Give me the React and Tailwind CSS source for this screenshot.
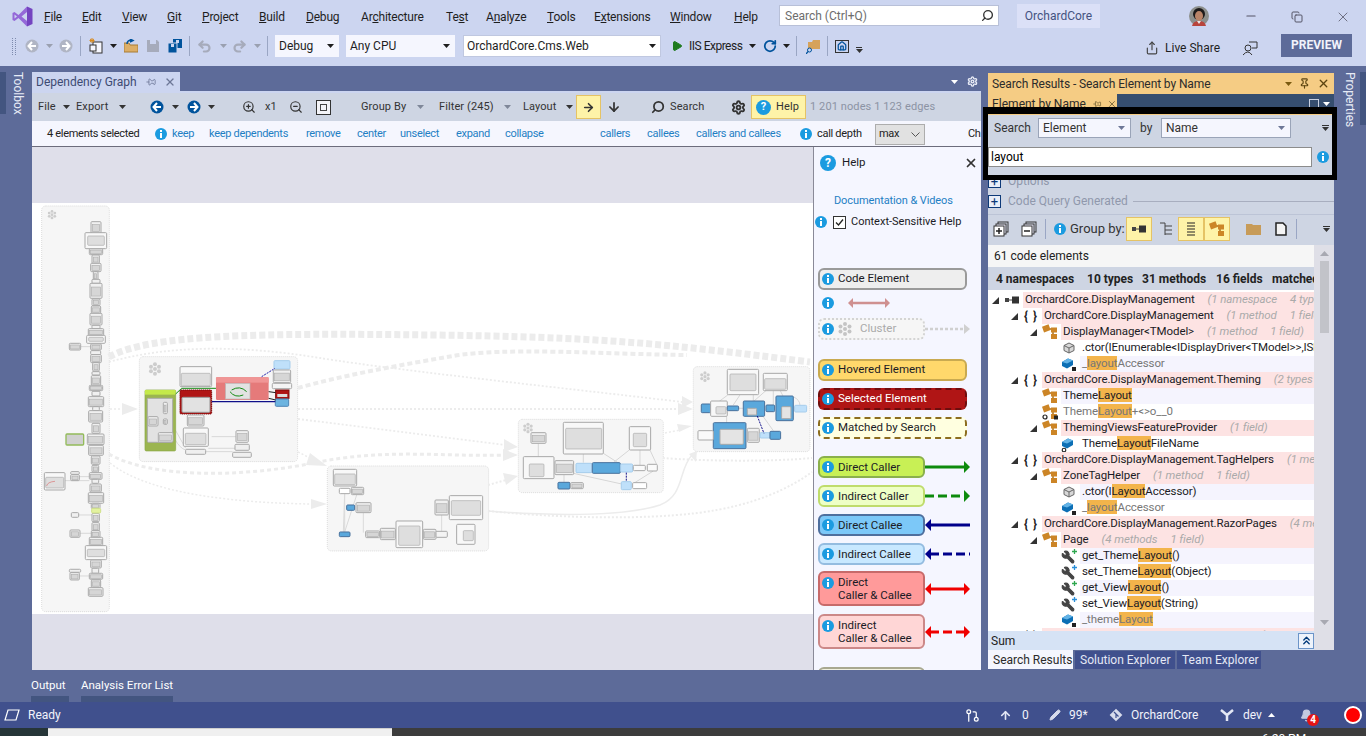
import { ArrowDown, ArrowRight, ArrowUp, Bell, ChevronsUp, Copy, GitPullRequest, Home, Minus, Pencil, Pin, Play, Redo2, RotateCw, Search, Settings, Share, Undo2, Wrench, X, ZoomIn, ZoomOut } from 'lucide-react';

const Caret = ({ className = 'text-[#333]' }) => (
  <svg width="7" height="4" viewBox="0 0 7 4" className={`shrink-0 ${className}`}>
    <polygon points="0,0 7,0 3.5,4" fill="currentColor" />
  </svg>
);

const Info = ({ className = '' }) => (
  <svg width="12" height="12" viewBox="0 0 12 12" className={`shrink-0 ${className}`}>
    <circle cx="6" cy="6" r="6" fill="#1b9be0" />
    <rect x="5" y="2" width="2" height="2" fill="#fff" />
    <rect x="5" y="5" width="2" height="5" fill="#fff" />
  </svg>
);

const Sep = ({ className = '' }) => <div className={`w-px h-[20px] bg-[#9aa6c4] shrink-0 ${className}`} />;

const NavCircle = ({ color, dir, className = '' }) => (
  <svg width="14" height="14" viewBox="0 0 14 14" className={`shrink-0 ${className}`}>
    <circle cx="7" cy="7" r="6.5" fill={color} />
    <path d={dir === 'left' ? 'M7 3 L3.5 7 L7 11 M4 7 H11' : 'M7 3 L10.5 7 L7 11 M3 7 H10'} stroke="#fff" strokeWidth="2" fill="none" />
  </svg>
);

const VsLogo = () => (
  <svg width="21" height="21" viewBox="0 0 21 21" className="shrink-0">
    <path d="M15 0.5 L6.5 9 L2.5 6 L0.5 7 V14 L2.5 15 L6.5 12 L15 20.5 V15 L9.5 10.5 L15 6 Z M2.5 8.5 L5 10.5 L2.5 12.5 Z" fill="#9468d8" fillRule="evenodd" />
    <path d="M15 0.5 L20.5 3 V18 L15 20.5 Z" fill="#7444c0" />
  </svg>
);

const Avatar = () => (
  <svg width="20" height="20" viewBox="0 0 20 20" className="shrink-0">
    <circle cx="10" cy="10" r="10" fill="#8c8f8c" />
    <circle cx="10" cy="8" r="6" fill="#1c1a1a" />
    <ellipse cx="10" cy="10" rx="4" ry="5" fill="#b98468" />
    <path d="M3 20 Q4 15 10 15 Q16 15 17 20 Z" fill="#b8443c" />
    <path d="M8 15 L10 18 L12 15 Z" fill="#e8e8e8" />
  </svg>
);

const ClassIcon = ({ ban = false }) => (
  <svg width="16" height="16" viewBox="0 0 16 16" className="shrink-0">
    <path d="M5 5 H11 V12" stroke="#a9701c" strokeWidth="1.5" fill="none" />
    <rect x="1" y="1.5" width="7" height="6" fill="#cc8526" transform="rotate(-20 4 5)" />
    <rect x="9" y="3.5" width="6" height="5" fill="#cc8526" />
    <rect x="9" y="10" width="6" height="5" fill="#cc8526" />
    {ban && <circle cx="3" cy="13" r="2" fill="#fff" stroke="#222" strokeWidth="1.2" />}
    {ban && <rect x="12" y="11.5" width="4" height="4" fill="#222" />}
  </svg>
);

const FieldIcon = ({ lock = false, ban = false }) => (
  <svg width="16" height="16" viewBox="0 0 16 16" className="shrink-0">
    <path d="M1 6 L7 2.5 L12 4.5 V9 L6 12.5 L1 10 Z" fill="#0c6fb5" />
    <path d="M1 6 L7 2.5 L12 4.5 L6 7.5 Z" fill="#63b3e6" />
    {lock && <rect x="11" y="11" width="4" height="4" fill="#222" />}
    {ban && <circle cx="3" cy="14" r="1.8" fill="#fff" stroke="#222" strokeWidth="1.1" />}
  </svg>
);

const CubeIcon = () => (
  <svg width="12" height="12" viewBox="0 0 12 12" className="shrink-0">
    <path d="M6 1 L11 3.5 V8.5 L6 11 L1 8.5 V3.5 Z" fill="#d8d8d8" stroke="#666" />
    <path d="M1 3.5 L6 6 L11 3.5 M6 6 V11" stroke="#666" fill="none" />
  </svg>
);

const WrenchIcon = ({ color }) => (
  <div className="relative w-[16px] h-[14px] shrink-0">
    <Wrench size={14} className="text-[#444] fill-[#444] -scale-x-100 absolute left-0 top-[1px]" />
    <svg width="5" height="5" viewBox="0 0 5 5" className="absolute right-0 top-0">
      <path d="M0 2.5 H5 M2.5 0 V5" stroke={color} strokeWidth="1.3" />
    </svg>
  </div>
);

const NsIcon = () => (
  <svg width="14" height="8" viewBox="0 0 14 8" className="shrink-0">
    <rect x="0" y="2" width="4" height="4" fill="#444" />
    <rect x="4" y="3.5" width="3" height="1" fill="#444" />
    <rect x="7" y="0.5" width="7" height="7" fill="#333" />
  </svg>
);

const Braces = () => <span className="text-[12px] font-bold text-[#222] tracking-[1px] shrink-0">{'{ }'}</span>;

const Expander = () => (
  <svg width="7" height="7" viewBox="0 0 7 7" className="shrink-0">
    <polygon points="7,0 7,7 0,7" fill="#333" />
  </svg>
);

// splits the label so the matched part gets the orange search highlight
const Hl = ({ text }) => {
  const parts = text.split(/(layout)/i);
  return parts.map((p, i) =>
    /^layout$/i.test(p) ? <span key={i} className="bg-[#f3b44b]">{p}</span> : <span key={i}>{p}</span>
  );
};

const treeRows = [
  { lvl: 0, exp: 1, icon: <NsIcon />, text: 'OrchardCore.DisplayManagement', meta: ['(1 namespace', '4 types)'], bg: 'bg-[#fde3e3]' },
  { lvl: 1, exp: 1, icon: <Braces />, text: 'OrchardCore.DisplayManagement', meta: ['(1 method', '1 field)'], bg: 'bg-[#fde3e3]' },
  { lvl: 2, exp: 1, icon: <ClassIcon />, text: 'DisplayManager<TModel>', meta: ['(1 method', '1 field)'], bg: 'bg-[#fde3e3]' },
  { lvl: 3, icon: <CubeIcon />, text: '.ctor(IEnumerable<IDisplayDriver<TModel>>,IShapeFactory)', bg: 'bg-white' },
  { lvl: 3, icon: <FieldIcon lock />, text: '_layoutAccessor', gray: 1, bg: 'bg-[#f5f4fe]' },
  { lvl: 1, exp: 1, icon: <Braces />, text: 'OrchardCore.DisplayManagement.Theming', meta: ['(2 types'], bg: 'bg-[#fde3e3]' },
  { lvl: 2, icon: <ClassIcon />, text: 'ThemeLayout', bg: 'bg-[#f5f4fe]' },
  { lvl: 2, icon: <ClassIcon ban />, text: 'ThemeLayout+<>o__0', gray: 1, bg: 'bg-white' },
  { lvl: 2, exp: 1, icon: <ClassIcon />, text: 'ThemingViewsFeatureProvider', meta: ['(1 field)'], bg: 'bg-[#fde3e3]' },
  { lvl: 3, icon: <FieldIcon ban />, text: 'ThemeLayoutFileName', bg: 'bg-white' },
  { lvl: 1, exp: 1, icon: <Braces />, text: 'OrchardCore.DisplayManagement.TagHelpers', meta: ['(1 method'], bg: 'bg-[#fde3e3]' },
  { lvl: 2, exp: 1, icon: <ClassIcon />, text: 'ZoneTagHelper', meta: ['(1 method', '1 field)'], bg: 'bg-[#fde3e3]' },
  { lvl: 3, icon: <CubeIcon />, text: '.ctor(ILayoutAccessor)', bg: 'bg-[#f5f4fe]' },
  { lvl: 3, icon: <FieldIcon lock />, text: '_layoutAccessor', gray: 1, bg: 'bg-white' },
  { lvl: 1, exp: 1, icon: <Braces />, text: 'OrchardCore.DisplayManagement.RazorPages', meta: ['(4 methods'], bg: 'bg-[#fde3e3]' },
  { lvl: 2, exp: 1, icon: <ClassIcon />, text: 'Page', meta: ['(4 methods', '1 field)'], bg: 'bg-[#fde3e3]' },
  { lvl: 3, icon: <WrenchIcon color="#2fa84f" />, text: 'get_ThemeLayout()', bg: 'bg-[#f5f4fe]' },
  { lvl: 3, icon: <WrenchIcon color="#2a8fd8" />, text: 'set_ThemeLayout(Object)', bg: 'bg-white' },
  { lvl: 3, icon: <WrenchIcon color="#2fa84f" />, text: 'get_ViewLayout()', bg: 'bg-[#f5f4fe]' },
  { lvl: 3, icon: <WrenchIcon color="#2a8fd8" />, text: 'set_ViewLayout(String)', bg: 'bg-white' },
  { lvl: 3, icon: <FieldIcon lock />, text: '_themeLayout', gray: 1, bg: 'bg-[#f5f4fe]' },
  { lvl: 1, exp: 1, icon: <Braces />, text: 'OrchardCore.DisplayManagement.Zones', meta: ['(3 types'], bg: 'bg-[#fde3e3]' },
];

const lvlWidth = ['w-[35px]', 'w-[54px]', 'w-[73px]', 'w-[92px]'];

const TreeRow = ({ row }) => (
  <div className="flex h-[16px] shrink-0 items-center text-[11.5px] tracking-[-0.1px]">
    <div className={`${lvlWidth[row.lvl]} flex justify-end items-center shrink-0 h-full bg-white`}>
      <div className="w-[12px] flex justify-center shrink-0">{row.exp && <Expander />}</div>
      <div className="w-[22px] flex justify-center shrink-0">{row.icon}</div>
    </div>
    <div className={`flex-1 h-full min-w-0 flex items-center pl-[2px] whitespace-nowrap overflow-hidden leading-none ${row.bg} ${row.gray ? 'text-[#777]' : 'text-[#1b1b25]'}`}>
      <span><Hl text={row.text} /></span>
      {row.meta && <span className="ml-[13px] italic text-[#aaa]">{row.meta[0]}</span>}
      {row.meta && row.meta[1] && <span className="ml-[13px] italic text-[#aaa]">{row.meta[1]}</span>}
    </div>
  </div>
);

const ArrowLegend = ({ color, dashed = false, left = false, right = false }) => (
  <svg width="45" height="12" viewBox="0 0 45 12" className="shrink-0">
    <line x1={left ? 5 : 0} y1="6" x2={right ? 40 : 45} y2="6" stroke={color} strokeWidth="3" strokeDasharray={dashed ? '9 4' : undefined} />
    {right && <polygon points="39,0 45,6 39,12" fill={color} />}
    {left && <polygon points="6,0 0,6 6,12" fill={color} />}
  </svg>
);

const Pill = ({ className, children, tall = false }) => (
  <div className={`${tall ? 'h-[35px] items-start pt-[3px]' : 'h-[22px] items-center'} w-[107px] shrink-0 flex gap-[4px] pl-[2px] border-2 rounded-[6px] leading-[13px] ${className}`}>
    <Info className={tall ? 'mt-[1px]' : ''} />
    <div>{children}</div>
  </div>
);

const WidePill = ({ className, children }) => (
  <div className={`h-[22px] w-[149px] shrink-0 flex items-center gap-[4px] pl-[2px] border-2 rounded-[6px] ${className}`}>
    <Info />
    <span>{children}</span>
  </div>
);

const HelpPanel = () => (
  <div className="w-[168px] h-full overflow-hidden bg-[#f5f6ff] border-l border-[#8a8a98] text-[#1b1b25] text-[11.5px] shrink-0 flex flex-col pl-[4px]">
    <div className="flex items-center mt-[6px] h-[20px] shrink-0">
      <div className="w-[16px] h-[16px] rounded-full bg-[#1b9be0] text-white font-bold text-[12px] flex items-center justify-center ml-[2px]">?</div>
      <span className="ml-[6px]">Help</span>
      <X size={14} strokeWidth={3} className="text-[#333] ml-auto mr-[3px]" />
    </div>
    <div className="mt-[20px] ml-[16px] text-[#1f7fc4] h-[16px] leading-[16px] text-[11px] tracking-[-0.1px] whitespace-nowrap">Documentation &amp; Videos</div>
    <div className="flex items-center mt-[5px] h-[16px] -ml-[3px] shrink-0">
      <Info />
      <div className="w-[13px] h-[13px] ml-[6px] border border-[#333] bg-white flex items-center justify-center">
        <svg width="9" height="9" viewBox="0 0 9 9"><path d="M1 4.5 L3.5 7 L8 1.5" stroke="#222" strokeWidth="1.3" fill="none" /></svg>
      </div>
      <span className="ml-[5px] whitespace-nowrap text-[11px]">Context-Sensitive Help</span>
    </div>
    <WidePill className="mt-[38px] bg-[#eeeeee] border-[#9a9a9a]">Code Element</WidePill>
    <div className="flex items-center mt-[5px] h-[16px] pl-[4px] shrink-0">
      <Info />
      <svg width="42" height="12" viewBox="0 0 42 12" className="ml-[14px]">
        <line x1="4" y1="6" x2="38" y2="6" stroke="#cf9090" strokeWidth="2.5" />
        <polygon points="5,1 0,6 5,11" fill="#cf9090" />
        <polygon points="37,1 42,6 37,11" fill="#cf9090" />
      </svg>
    </div>
    <div className="flex items-center mt-[7px] shrink-0">
      <div className="h-[22px] w-[107px] flex items-center pl-[2px] border-2 border-dotted border-[#d4d4d4] rounded-[6px] bg-[#f6f6f6] text-[#aaa] shrink-0">
        <Info />
        <svg width="14" height="14" viewBox="0 0 14 14" className="ml-[4px]">
          {[[7, 2], [2.5, 4.5], [11.5, 4.5], [7, 7], [2.5, 9.5], [11.5, 9.5], [7, 12]].map(([cx, cy]) => <circle key={`${cx}-${cy}`} cx={cx} cy={cy} r="2" fill="#c4c4c4" />)}
        </svg>
        <span className="ml-[8px]">Cluster</span>
      </div>
      <svg width="45" height="12" viewBox="0 0 45 12">
        <line x1="0" y1="6" x2="40" y2="6" stroke="#d0d0d0" strokeWidth="2.5" strokeDasharray="3 2" />
        <polygon points="39,1 45,6 39,11" fill="#d0d0d0" />
      </svg>
    </div>
    <WidePill className="mt-[19px] bg-[#ffd86b] border-[#c9aa50]">Hovered Element</WidePill>
    <WidePill className="mt-[7px] bg-[#b01515] border-dashed border-[#6e0e0e] text-white">Selected Element</WidePill>
    <WidePill className="mt-[7px] bg-[#ffffe0] border-dashed border-[#8c6d1f]">Matched by Search</WidePill>
    <div className="flex items-center mt-[17px] shrink-0">
      <Pill className="bg-[#c8f055] border-[#8ab04c]">Direct Caller</Pill>
      <ArrowLegend color="#0d8a0d" right />
    </div>
    <div className="flex items-center mt-[7px] shrink-0">
      <Pill className="bg-[#eeffc6] border-[#bfdc6c]">Indirect Caller</Pill>
      <ArrowLegend color="#0d8a0d" dashed right />
    </div>
    <div className="flex items-center mt-[7px] shrink-0">
      <Pill className="bg-[#7cc8f8] border-[#4e6f9e]">Direct Callee</Pill>
      <ArrowLegend color="#00008b" left />
    </div>
    <div className="flex items-center mt-[7px] shrink-0">
      <Pill className="bg-[#c8e8ff] border-[#94bce0]">Indirect Callee</Pill>
      <ArrowLegend color="#00008b" dashed left />
    </div>
    <div className="flex items-center mt-[6px] shrink-0">
      <Pill tall className="bg-[#ff9a9a] border-[#c76a6a]">Direct<br />Caller &amp; Callee</Pill>
      <ArrowLegend color="#f00000" left right />
    </div>
    <div className="flex items-center mt-[8px] shrink-0">
      <Pill tall className="bg-[#ffd6d6] border-[#cc8888]">Indirect<br />Caller &amp; Callee</Pill>
      <ArrowLegend color="#f00000" dashed left right />
    </div>
    <div className="mt-[18px] h-[22px] w-[107px] border-2 rounded-[6px] border-[#a8a890] bg-[#f0f0e0] shrink-0" />
  </div>
);

// the graph picture, coordinates read off the screenshot
const Box = ({ b, fill = '#e0e0e0', stroke = '#a8a8a8', sw = 3, dash }) => (
  <rect x={b[0]} y={b[1]} width={b[2]} height={b[3]} rx="3" fill={fill} stroke={stroke} strokeWidth={sw} strokeDasharray={dash} />
);

const Framed = ({ b, inner }) => (
  <g>
    <Box b={b} fill="#f8f8f8" />
    <Box b={inner} fill="#dedede" sw={2} stroke="#aaa" />
  </g>
);

// column nodes: light shell with a darker core
const Nested = ({ b }) => (
  <g>
    <Box b={b} fill="#f0f0f0" />
    {b[3] >= 16 && <rect x={b[0] + 4} y={b[1] + b[3] * 0.25} width={b[2] - 8} height={b[3] * 0.6} fill="#d6d6d6" stroke="#b0b0b0" strokeWidth="2" />}
  </g>
);

const ClusterGlyph = ({ x, y, s = 1 }) => (
  <g transform={`translate(${x} ${y}) scale(${s})`} fill="#cdcdcd">
    {[[0, -14], [-12, -7], [12, -7], [0, 0], [-12, 7], [12, 7], [0, 14]].map(([cx, cy]) => <circle key={`${cx}-${cy}`} cx={cx} cy={cy} r="6" />)}
  </g>
);

const Clust = ({ b }) => <rect x={b[0]} y={b[1]} width={b[2]} height={b[3]} rx="12" fill="#f6f6f6" stroke="#dcdcdc" strokeWidth="3" strokeDasharray="3 3" />;

const columnNodes = [
  [183, 65, 30, 35], [178, 146, 40, 18], [186, 165, 22, 25], [182, 190, 31, 25], [190, 215, 14, 25], [186, 238, 24, 12],
  [180, 250, 36, 45], [186, 297, 24, 20], [184, 318, 28, 22], [180, 340, 36, 35], [186, 376, 24, 10], [175, 386, 46, 20],
  [182, 432, 32, 18], [182, 452, 30, 12], [182, 464, 32, 24], [188, 488, 20, 25], [186, 515, 24, 10], [184, 527, 28, 28],
  [178, 556, 40, 16], [186, 574, 24, 14], [175, 590, 46, 30], [188, 620, 20, 12], [176, 632, 42, 34], [186, 670, 24, 30],
  [172, 702, 50, 32], [176, 736, 44, 30], [184, 768, 26, 25], [186, 796, 20, 20], [178, 818, 38, 20], [186, 838, 20, 12],
  [180, 852, 34, 24], [175, 878, 46, 32], [184, 910, 26, 16], [186, 940, 22, 25], [186, 968, 22, 25], [184, 992, 26, 20],
  [178, 1012, 40, 25], [182, 1080, 32, 24], [186, 1105, 20, 15], [178, 1120, 40, 18], [184, 1140, 28, 22], [175, 1163, 44, 26],
  [118, 430, 34, 20], [122, 824, 26, 18], [124, 938, 22, 14], [120, 990, 30, 22], [120, 1118, 28, 22], [118, 1108, 34, 9], [122, 815, 26, 8],
];

const Flow = ({ d, w = 1.5, dash = '2 2', head }) => (
  <g>
    <path d={d} fill="none" stroke="#ececec" strokeWidth={w} strokeDasharray={dash} />
    {head && <polygon points={head} fill="#ececec" />}
  </g>
);

const GraphSvg = () => (
  <svg viewBox="32 147 781 523" className="absolute inset-0 w-full h-full blur-[0.35px]">
    <g transform="translate(30 200) scale(.3333)">
      <Clust b={[35, 18, 203, 1217]} />
      <ClusterGlyph x={66} y={44} s={0.7} />
      <Clust b={[328, 470, 475, 315]} />
      <ClusterGlyph x={375} y={507} />
      <Clust b={[892, 798, 484, 255]} />
    </g>
    <g transform="translate(320 340) scale(.3333)">
      <Clust b={[595, 238, 435, 220]} />
      <ClusterGlyph x={624} y={264} s={0.8} />
      <Clust b={[1120, 80, 350, 255]} />
      <ClusterGlyph x={1155} y={110} s={0.8} />
    </g>

    <Flow d="M109 357 C 150 334, 260 333, 430 335 S 660 343, 810 362" w={7} dash="6 3" />
    <Flow d="M109 362 C 170 345, 240 345, 320 358 S 600 392, 682 402" w={1.8} head="682,396 693,402 682,408" />
    <Flow d="M298 388 C 340 376, 400 365, 453 356 S 600 354, 687 355" w={4} dash="5 3" />
    <Flow d="M298 409 H682" w={1.8} head="678,403 693,409 678,415" />
    <Flow d="M298 419 L506 445" w={1.8} head="504,439 518,447 504,452" />
    <Flow d="M109 454 C 150 478, 240 478, 313 463 S 440 457, 506 455" w={3} dash="4 3" head="503,449 518,455 503,461" />
    <Flow d="M110 463 C 150 495, 240 503, 312 504" w={1.5} head="311,499 327,504 311,509" />
    <Flow d="M110 409 H130" w={1.5} head="122,403 138,409 122,415" />
    <Flow d="M298 452 L316 461" w={1.5} head="310,453 327,466 306,465" />
    <Flow d="M488 485 L506 480" w={2} head="503,473 518,476 506,485" />
    <Flow d="M488 511 C 540 515, 620 518, 660 505 C 685 495, 678 470, 692 455" w={1.5} dash="0" head="689,454 697,451 696,462" />
    <Flow d="M663 458 C 700 461, 770 462, 812 458" w={2} />
    <Flow d="M488 511 C 560 518, 640 520, 697 513 S 790 488, 812 472" w={2} />
    <Flow d="M665 433 L680 430" w={1.5} head="677,424 692,426 679,432" />

    <g transform="translate(30 200) scale(.3333)">
      <path d="M197 440 H152 M197 830 H148 M197 945 H146 M197 1000 H150 M197 1128 H148 M105 842 H178" stroke="#d8d8d8" strokeWidth="3" fill="none" />
      {columnNodes.map((b) => <Nested key={b.join()} b={b} />)}
      <Framed b={[165, 98, 65, 48]} inner={[173, 108, 50, 28]} />
      <Framed b={[170, 406, 56, 24]} inner={[176, 412, 44, 12]} />
      <Framed b={[166, 1037, 64, 42]} inner={[172, 1048, 52, 22]} />
      <Box b={[185, 925, 27, 14]} fill="#e3f29f" stroke="#cfe08a" />
      <Box b={[108, 702, 53, 33]} fill="#d0d0d0" stroke="#93bb5a" sw={4} />
      <Framed b={[43, 818, 62, 52]} inner={[47, 832, 54, 32]} />
      <path d="M50 858 Q52 846 75 844" stroke="#d97070" strokeWidth="2" fill="none" />

      <path d="M545 710 H618 M535 745 H615 M527 755 H608 M436 690 L467 745 M436 720 Q450 745 467 750" stroke="#d8d8d8" strokeWidth="3" fill="none" />
      <rect x="345" y="570" width="92" height="183" rx="4" fill="#9bb550" stroke="#8aa845" strokeWidth="2" />
      <rect x="345" y="570" width="92" height="14" fill="#c4e94a" />
      <Box b={[352, 595, 76, 132]} fill="#e2e2e2" stroke="#aaa" />
      <Nested b={[400, 607, 12, 34]} />
      <Nested b={[354, 650, 30, 28]} />
      <Nested b={[400, 657, 12, 16]} />
      <Nested b={[385, 698, 44, 28]} />
      <Framed b={[450, 500, 95, 60]} inner={[454, 520, 87, 38]} />
      <rect x="450" y="570" width="95" height="72" rx="3" fill="#b01515" stroke="#7d0e0e" strokeWidth="3" strokeDasharray="4 2" />
      <Box b={[456, 592, 84, 45]} fill="#e2e2e2" stroke="#999" />
      <rect x="558" y="532" width="158" height="68" rx="4" fill="#e57a7a" />
      <rect x="558" y="532" width="158" height="16" fill="#f09595" />
      <rect x="587" y="550" width="73" height="47" fill="#e2e2e2" stroke="#bbb" strokeWidth="2" />
      <path d="M605 570 Q630 555 650 575 M600 575 Q615 595 640 585" stroke="#138a13" strokeWidth="3" fill="none" />
      <Box b={[732, 482, 48, 25]} fill="#bfe0fa" stroke="#a6cdec" />
      <Nested b={[730, 510, 52, 38]} />
      <Box b={[727, 550, 58, 16]} fill="#f4f4f4" />
      <rect x="737" y="570" width="40" height="25" fill="#b01515" stroke="#7d0e0e" strokeWidth="3" />
      <rect x="742" y="582" width="30" height="9" fill="#ddd" />
      <Box b={[736, 597, 40, 22]} fill="#6cb4e0" stroke="#4e86b6" />
      <path d="M437 582 L455 565 H558" stroke="#138a13" strokeWidth="3" fill="none" />
      <path d="M545 605 H736" stroke="#10108a" strokeWidth="4" fill="none" />
      <path d="M716 575 L737 578 M716 595 L737 600" stroke="#222" strokeWidth="3" fill="none" />
      <path d="M695 530 L735 505" stroke="#1c1ca8" strokeWidth="3" strokeDasharray="6 3" fill="none" />
      <Nested b={[472, 645, 50, 33]} />
      <Framed b={[460, 684, 75, 55]} inner={[466, 700, 62, 34]} />
      <Box b={[467, 748, 60, 15]} fill="#efefef" />
      <Nested b={[618, 692, 37, 35]} />
      <Box b={[615, 733, 43, 18]} fill="#efefef" />
      <Box b={[608, 757, 56, 15]} fill="#efefef" />
    </g>

    <g transform="translate(320 340) scale(.3333)">
      <path d="M74 460 V576 M74 460 L70 576 M110 465 L74 576 M130 518 V578 M365 525 V575" stroke="#dadada" strokeWidth="3" fill="none" />
      <Framed b={[40, 388, 70, 50]} inner={[44, 402, 62, 32]} />
      <Box b={[58, 445, 32, 16]} fill="#fff" />
      <Nested b={[94, 442, 37, 22]} />
      <Box b={[80, 495, 24, 16]} fill="#5aa8dc" stroke="#48709c" />
      <Nested b={[108, 488, 45, 30]} />
      <Box b={[58, 576, 32, 14]} fill="#5aa8dc" stroke="#48709c" />
      <Nested b={[137, 573, 42, 20]} />
      <Nested b={[181, 565, 45, 34]} />
      <Framed b={[228, 543, 80, 80]} inner={[236, 558, 64, 58]} />
      <Nested b={[310, 568, 38, 30]} />
      <Box b={[348, 574, 34, 18]} fill="#f4f4f4" />
      <Nested b={[345, 480, 40, 45]} />
      <Framed b={[388, 467, 100, 72]} inner={[394, 482, 88, 44]} />
      <Framed b={[410, 553, 55, 60]} inner={[430, 572, 30, 30]} />

      <path d="M655 310 V350 M790 342 V368 M850 340 L900 372 M928 330 L880 368 M960 330 V376 M990 330 L1010 373 M760 400 L905 432 M732 405 V428 M938 432 L1000 393" stroke="#d6d6d6" strokeWidth="3" fill="none" />
      <Nested b={[633, 278, 45, 32]} />
      <Framed b={[730, 247, 120, 95]} inner={[737, 265, 108, 62]} />
      <Framed b={[928, 260, 64, 70]} inner={[940, 280, 40, 40]} />
      <Framed b={[610, 350, 92, 66]} inner={[628, 372, 44, 38]} />
      <Nested b={[705, 362, 56, 42]} />
      <Box b={[768, 370, 48, 28]} fill="#bfe0fa" stroke="#a6cdec" />
      <Box b={[817, 368, 84, 32]} fill="#5aa8dc" stroke="#48709c" />
      <Box b={[902, 372, 36, 24]} fill="#bfe0fa" stroke="#a6cdec" />
      <Box b={[940, 376, 36, 16]} fill="#fafafa" />
      <Box b={[982, 373, 30, 20]} fill="#fafafa" />
      <Box b={[714, 427, 36, 20]} fill="#5aa8dc" stroke="#48709c" />
      <Nested b={[752, 428, 38, 18]} />
      <Box b={[904, 425, 30, 24]} fill="#bfe0fa" stroke="#a6cdec" />
      <Box b={[938, 428, 42, 18]} fill="#fff" />
      <path d="M919 398 V424" stroke="#10108a" strokeWidth="3" strokeDasharray="6 3" fill="none" />

      <path d="M1230 160 L1190 190 M1260 165 L1240 195 M1300 165 L1300 185 M1340 150 L1300 185 M1360 150 V195 M1380 150 L1390 170 M1420 170 Q1440 180 1440 196 M1220 225 V250 M1330 230 L1360 272 M1255 205 H1270" stroke="#d6d6d6" strokeWidth="3" fill="none" />
      <Framed b={[1222, 88, 94, 76]} inner={[1230, 102, 78, 50]} />
      <Framed b={[1330, 100, 72, 52]} inner={[1334, 116, 64, 32]} />
      <Box b={[1144, 192, 28, 26]} fill="#5aa8dc" stroke="#48709c" />
      <Framed b={[1172, 183, 50, 46]} inner={[1188, 200, 30, 22]} />
      <Box b={[1222, 198, 34, 14]} fill="#5aa8dc" stroke="#48709c" />
      <Box b={[1270, 183, 64, 46]} fill="#5aa8dc" stroke="#48709c" />
      <Box b={[1282, 205, 28, 20]} fill="#ddd" />
      <Box b={[1338, 195, 26, 20]} fill="#5aa8dc" stroke="#48709c" />
      <Box b={[1368, 168, 52, 74]} fill="#5aa8dc" stroke="#48709c" />
      <Box b={[1385, 200, 28, 36]} fill="#e4e4e4" />
      <Box b={[1424, 196, 36, 20]} fill="#bfe0fa" stroke="#a6cdec" />
      <Box b={[1180, 248, 98, 78]} fill="#5aa8dc" stroke="#48709c" />
      <Box b={[1200, 268, 70, 45]} fill="#e4e4e4" />
      <Box b={[1134, 272, 46, 28]} fill="#fafafa" />
      <Nested b={[1282, 265, 36, 42]} />
      <Box b={[1320, 278, 30, 16]} fill="#bfe0fa" stroke="#a6cdec" />
      <Box b={[1350, 274, 32, 24]} fill="#5aa8dc" stroke="#48709c" />
      <path d="M1312 228 L1332 280" stroke="#10108a" strokeWidth="3" strokeDasharray="6 3" fill="none" />
    </g>
  </svg>
);

const menuItems = [
  ['w-[38px]', '', 'F', 'ile'], ['w-[40px]', '', 'E', 'dit'], ['w-[45px]', '', 'V', 'iew'], ['w-[35px]', '', 'G', 'it'],
  ['w-[57px]', '', 'P', 'roject'], ['w-[47px]', '', 'B', 'uild'], ['w-[55px]', '', 'D', 'ebug'], ['w-[85px]', 'Ar', 'c', 'hitecture'],
  ['w-[40px]', 'Te', 's', 't'], ['w-[61px]', 'A', 'n', 'alyze'], ['w-[47px]', '', 'T', 'ools'], ['w-[76px]', 'E', 'x', 'tensions'],
  ['w-[64px]', '', 'W', 'indow'], ['w-[30px]', '', 'H', 'elp'],
];

const TitleBar = () => (
  <div className="h-[33px] shrink-0 flex items-center text-[#1e1e1e] bg-[#ccd5f0]">
    <div className="ml-[12px]"><VsLogo /></div>
    <div className="flex ml-[11px] tracking-[-0.2px]">
      {menuItems.map(([w, a, b, c]) => (
        <span key={a + b + c} className={`${w} whitespace-nowrap`}>{a}<u>{b}</u>{c}</span>
      ))}
    </div>
    <div className="absolute left-[779px] top-[5px] w-[220px] h-[21px] bg-white border border-[#b8c0d8] flex items-center pl-[5px] text-[#6d6d6d]">
      Search (Ctrl+Q)
      <Search size={13} strokeWidth={2.5} className="ml-auto mr-[4px] text-[#333] -scale-x-100" />
    </div>
    <div className="absolute left-[1017px] top-[4px] w-[83px] h-[24px] bg-[#dbe0f7] text-[#44527f] flex items-center justify-center">OrchardCore</div>
    <div className="absolute left-[1189px] top-[6px]"><Avatar /></div>
    <Minus size={14} className="absolute left-[1244px] top-[9px] text-[#556]" />
    <Copy size={12} className="absolute left-[1291px] top-[11px] text-[#556]" />
    <X size={16} strokeWidth={1.2} className="absolute left-[1335px] top-[9px] text-[#556]" />
  </div>
);

const Toolbar = () => (
  <div className="h-[33px] shrink-0 flex items-start text-[#1e1e1e] bg-[#ccd5f0]">
    <div className="flex items-center h-[22px] mt-[2px] w-full">
      <div className="ml-[12px] w-[4px] h-[17px] border-x border-dotted border-[#7e8bad] shrink-0" />
      <NavCircle color="#b0b5c4" dir="left" className="ml-[9px]" />
      <Caret className="ml-[7px] text-[#9aa0b0]" />
      <NavCircle color="#b0b5c4" dir="right" className="ml-[6px]" />
      <Sep className="ml-[7px]" />
      <svg width="14" height="16" viewBox="0 0 14 16" className="ml-[8px] shrink-0">
        <rect x="4" y="4" width="9" height="11" fill="#f5f6fe" stroke="#333" />
        <rect x="1" y="7" width="6" height="6" fill="#f5f6fe" stroke="#333" />
        <path d="M3 0 V5 M0.5 2.5 H5.5 M1 1 L5 4 M5 1 L1 4" stroke="#d98a1e" strokeWidth="1" />
      </svg>
      <Caret className="ml-[7px]" />
      <svg width="14" height="14" viewBox="0 0 14 14" className="ml-[7px] shrink-0">
        <path d="M0 4 H5 L6 6 H14 V13 H0 Z" fill="#dcae66" stroke="#a87c35" />
        <path d="M3 5 Q3 1 8 1 M6 0 L9 1.5 L6 3" stroke="#00539c" strokeWidth="1.5" fill="none" />
      </svg>
      <svg width="14" height="14" viewBox="0 0 14 14" className="ml-[8px] shrink-0">
        <path d="M1 1 H11 L13 3 V13 H1 Z" fill="#a6abbb" />
        <rect x="4" y="1" width="6" height="4" fill="#ccd5f0" />
      </svg>
      <svg width="14" height="14" viewBox="0 0 14 14" className="ml-[8px] shrink-0">
        <path d="M5 0 H14 V9 H5 Z" fill="#00539c" />
        <rect x="8" y="1" width="3" height="3" fill="#ccd5f0" />
        <path d="M0 4 H9 V14 H0 Z" fill="#00539c" stroke="#ccd5f0" />
        <rect x="3" y="5" width="3" height="3" fill="#ccd5f0" />
      </svg>
      <Sep className="ml-[7px]" />
      <Undo2 size={15} strokeWidth={3.5} className="ml-[7px] text-[#a6abbb] shrink-0" />
      <Caret className="ml-[8px] text-[#9aa0b0]" />
      <Redo2 size={15} strokeWidth={3.5} className="ml-[5px] text-[#a6abbb] shrink-0" />
      <Caret className="ml-[7px] text-[#9aa0b0]" />
      <Sep className="ml-[6px]" />
      <div className="ml-[7px] w-[64px] h-[22px] bg-[#f5f6fe] flex items-center pl-[4px] shrink-0">Debug<Caret className="ml-auto mr-[5px]" /></div>
      <div className="ml-[7px] w-[109px] h-[22px] bg-[#f5f6fe] flex items-center pl-[4px] shrink-0">Any CPU<Caret className="ml-auto mr-[5px]" /></div>
      <div className="ml-[8px] w-[198px] h-[22px] bg-white flex items-center pl-[3px] border border-[#c0c8e0] shrink-0">OrchardCore.Cms.Web<Caret className="ml-auto mr-[4px]" /></div>
      <Play size={12} className="ml-[10px] text-[#1e7a1e] fill-[#1e7a1e] shrink-0" />
      <span className="ml-[6px] w-[54px] whitespace-nowrap tracking-[-0.5px] shrink-0">IIS Express</span>
      <Caret className="ml-[6px]" />
      <RotateCw size={14} strokeWidth={3} className="ml-[7px] text-[#00539c] shrink-0" />
      <Caret className="ml-[6px]" />
      <Sep className="ml-[6px]" />
      <svg width="14" height="15" viewBox="0 0 14 15" className="ml-[9px] shrink-0">
        <path d="M2 3 H6 L7 1 H14 V10 H2 Z" fill="#d6a25a" />
        <circle cx="3.5" cy="11" r="2" fill="#ccd5f0" stroke="#00539c" />
        <path d="M2 12.5 L0 15" stroke="#00539c" strokeWidth="1.3" />
      </svg>
      <Sep className="ml-[7px]" />
      <div className="ml-[7px] w-[14px] h-[13px] border border-[#333] flex items-center justify-center shrink-0"><Home size={10} strokeWidth={3} className="text-[#00539c]" /></div>
      <div className="ml-[7px] mt-[8px] shrink-0"><div className="w-[6px] h-px bg-[#333] mb-px" /><Caret /></div>
      <div className="ml-auto flex items-center mt-[4px] shrink-0">
        <Share size={14} className="text-[#444]" />
        <span className="ml-[6px] w-[54px] whitespace-nowrap">Live Share</span>
        <svg width="15" height="15" viewBox="0 0 15 15" className="ml-[24px]">
          <circle cx="5" cy="7" r="3" fill="none" stroke="#333" />
          <path d="M0 14 Q5 8 9 14 M6 1 H14 V7 H9" stroke="#333" fill="none" />
        </svg>
      </div>
      <div className="ml-[23px] mr-[14px] w-[71px] h-[23px] -mt-[2px] bg-[#5d6b99] text-[#f2f3fb] font-bold flex items-center justify-center shrink-0">PREVIEW</div>
    </div>
  </div>
);

const DocToolbar = () => (
  <div className="h-[28px] shrink-0 bg-[#ced5e3] flex items-center text-[#333] text-[11px] tracking-[0.1px] whitespace-nowrap">
    <span className="ml-[6px] w-[25px] pt-px shrink-0">File</span><Caret />
    <span className="ml-[6px] w-[39px] pt-px shrink-0">Export</span><Caret className="ml-[4px]" />
    <NavCircle color="#00539c" dir="left" className="ml-[24px]" /><Caret className="ml-[8px]" />
    <NavCircle color="#00539c" dir="right" className="ml-[8px]" /><Caret className="ml-[7px]" />
    <ZoomIn size={14} className="ml-[27px] shrink-0" />
    <span className="ml-[9px] w-[12px] pt-px shrink-0">x1</span>
    <ZoomOut size={14} className="ml-[12px] shrink-0" />
    <div className="ml-[13px] w-[15px] h-[15px] border border-[#333] bg-[#f4f4f8] flex items-center justify-center shrink-0"><div className="w-[7px] h-[7px] border border-[#444]" /></div>
    <span className="ml-[30px] w-[50px] pt-px shrink-0">Group By</span><Caret className="ml-[6px] text-[#7f8799]" />
    <span className="ml-[15px] w-[58px] pt-px shrink-0">Filter (245)</span><Caret className="ml-[7px] text-[#7f8799]" />
    <span className="ml-[12px] w-[40px] pt-px shrink-0">Layout</span><Caret className="ml-[3px]" />
    <div className="ml-[3px] w-[25px] h-[24px] bg-[#fef3a8] border border-[#e5c365] flex items-center justify-center shrink-0"><ArrowRight size={13} strokeWidth={3} /></div>
    <ArrowDown size={14} strokeWidth={3} className="ml-[6px] shrink-0" />
    <Search size={14} strokeWidth={3} className="ml-[30px] -scale-x-100 shrink-0" />
    <span className="ml-[5px] w-[40px] pt-px shrink-0">Search</span>
    <Settings size={15} strokeWidth={3} className="ml-[21px] shrink-0" />
    <div className="ml-[5px] w-[55px] h-[24px] bg-[#fef3a8] border border-[#e5c365] flex items-center pl-[4px] gap-[5px] shrink-0">
      <div className="w-[15px] h-[15px] rounded-full bg-[#1b9be0] text-white font-bold text-[11px] flex items-center justify-center">?</div>
      Help
    </div>
    <span className="ml-[4px] pt-px text-[#8c93a4]">1 201 nodes 1 123 edges</span>
  </div>
);

const ActionRow = () => (
  <div className="h-[26px] shrink-0 bg-[#f5f6fe] flex items-center pl-[15px] pt-px whitespace-nowrap overflow-hidden text-[#1f7fc4] text-[11px] tracking-[-0.3px] border-b border-[#6c6c7c]">
    <span className="w-[108px] shrink-0 text-[#222]">4 elements selected</span>
    <Info />
    <span className="ml-[5px] w-[37px] shrink-0">keep</span>
    <span className="w-[97px] shrink-0">keep dependents</span>
    <span className="w-[51px] shrink-0">remove</span>
    <span className="w-[43px] shrink-0">center</span>
    <span className="w-[56px] shrink-0">unselect</span>
    <span className="w-[49px] shrink-0">expand</span>
    <span className="w-[95px] shrink-0">collapse</span>
    <span className="w-[47px] shrink-0">callers</span>
    <span className="w-[49px] shrink-0">callees</span>
    <span className="w-[104px] shrink-0">callers and callees</span>
    <Info />
    <span className="ml-[5px] w-[58px] shrink-0 text-[#222]">call depth</span>
    <div className="w-[50px] h-[21px] bg-[#e1e1e1] border border-[#adadad] text-[#222] flex items-center pl-[3px] shrink-0">
      max
      <svg width="9" height="5" viewBox="0 0 9 5" className="ml-auto mr-[4px]"><path d="M0.5 0.5 L4.5 4.5 L8.5 0.5" stroke="#555" fill="none" /></svg>
    </div>
    <span className="ml-[43px] text-[#222]">Ch</span>
  </div>
);

const DocPane = () => (
  <div className="w-[949px] shrink-0 flex flex-col pt-[6px]">
    <div className="h-[19px] shrink-0 flex items-center">
      <div className="w-[148px] h-full bg-[#ccd5f0] flex items-center pl-[4px] pt-px text-[#3d4b73]">
        Dependency Graph
        <Pin size={10} className="ml-[9px] rotate-90 text-[#6d7797]" />
        <X size={12} strokeWidth={2.5} className="ml-[8px] text-[#6d7797]" />
      </div>
      <Caret className="ml-auto text-white" />
      <Settings size={11} strokeWidth={3} className="ml-[9px] mr-[3px] text-[#e8ebf6]" />
    </div>
    <div className="h-[2px] shrink-0 bg-[#ccd5f0]" />
    <DocToolbar />
    <ActionRow />
    <div className="h-[523px] shrink-0 flex">
      <div className="relative flex-1 bg-[#dfdfea] overflow-hidden">
        <div className="mt-[56px] h-[411px] bg-white" />
        <GraphSvg />
      </div>
      <HelpPanel />
    </div>
    <div className="h-[32px] shrink-0 pt-[6px] flex text-white text-[11.5px] gap-[12px] -ml-px whitespace-nowrap">
      <div className="flex flex-col w-[38px]"><span className="h-[20px] leading-[18px]">Output</span><div className="h-[6px] bg-[#435580]" /></div>
      <div className="flex flex-col w-[92px]"><span className="h-[20px] leading-[18px]">Analysis Error List</span><div className="h-[6px] bg-[#435580]" /></div>
    </div>
  </div>
);

const GroupToggle = ({ children, on = false }) => (
  <div className={`w-[26px] h-[24px] flex items-center justify-center shrink-0 ${on ? 'bg-[#fef3a8] border border-[#e5c365]' : ''}`}>{children}</div>
);

const StackBtn = ({ plus = false }) => (
  <svg width="16" height="16" viewBox="0 0 16 16" className="shrink-0">
    <rect x="5" y="1" width="10" height="10" fill="none" stroke="#333" />
    <rect x="3" y="3" width="10" height="10" fill="#eef" stroke="#333" />
    <rect x="1" y="5" width="10" height="10" fill="#fff" stroke="#333" />
    <path d={plus ? 'M3 10 H9 M6 7 V13' : 'M3 10 H9'} stroke="#222" strokeWidth="1.5" />
  </svg>
);

const PlusBox = () => (
  <div className="w-[13px] h-[13px] border border-[#0e3a78] bg-[#e9eef8] flex items-center justify-center text-[#0e3a78] text-[13px] leading-none shrink-0">+</div>
);

const SearchPane = () => (
  <div className="relative w-[346px] shrink-0 mt-[7px] h-[596px] flex flex-col">
    <div className="h-[21px] shrink-0 bg-[#f5cc84] flex items-center pl-[4px] text-[#2b2b2b] tracking-[-0.1px]">
      Search Results - Search Element by Name
      <Caret className="ml-auto text-[#7a5a10]" />
      <Pin size={11} strokeWidth={2.5} className="ml-[7px] text-[#5c4510]" />
      <X size={13} strokeWidth={2.5} className="ml-[7px] mr-[4px] text-[#5c4510]" />
    </div>
    <div className="h-[20px] shrink-0 bg-[#364e6f] flex items-center">
      <div className="w-[129px] h-full bg-[#f5cc84] flex items-center pl-[4px] text-[#2b2b2b] whitespace-nowrap">
        Element by Name
        <Pin size={10} className="ml-[7px] rotate-90 text-[#6b5a30]" />
        <X size={12} strokeWidth={2} className="ml-[6px] text-[#6b5a30]" />
      </div>
      <div className="ml-auto mr-[4px] flex items-center gap-[4px]">
        <div className="w-[10px] h-[10px] border border-[#c8d0e0]" />
        <Caret className="text-white" />
      </div>
    </div>
    <div className="h-px shrink-0 bg-[#f5cc84]" />
    <div className="h-[26px] shrink-0 bg-[#ced5e3] flex items-center text-[#333]">
      <span className="ml-[6px] w-[44px] shrink-0">Search</span>
      <div className="w-[93px] h-[20px] bg-[#f5f6fe] border border-[#9aa4b8] flex items-center pl-[4px] shrink-0">Element<Caret className="ml-auto mr-[5px] text-[#6d7797]" /></div>
      <span className="ml-[9px] w-[21px] shrink-0">by</span>
      <div className="w-[130px] h-[20px] bg-[#f5f6fe] border border-[#9aa4b8] flex items-center pl-[4px] shrink-0">Name<Caret className="ml-auto mr-[5px] text-[#6d7797]" /></div>
      <div className="ml-auto mr-[5px] shrink-0"><div className="w-[7px] h-px bg-[#333] mb-px" /><Caret /></div>
    </div>
    <div className="h-[31px] shrink-0 bg-[#ced5e3] pt-[6px] flex items-start">
      <div className="w-[324px] h-[20px] bg-white border border-[#8c8c8c] flex items-center pl-[2px] text-black shrink-0">layout</div>
      <Info className="ml-[5px] mt-[4px]" />
    </div>
    <div className="h-[18px] shrink-0 bg-[#ced5e3] flex items-center text-[#9098ac]">
      <PlusBox /><span className="ml-[7px]">Options</span>
    </div>
    <div className="h-[22px] shrink-0 bg-[#ced5e3] flex items-center text-[#9098ac]">
      <PlusBox /><span className="ml-[7px] whitespace-nowrap">Code Query Generated</span>
      <div className="flex-1 h-px bg-[#a8aebf] ml-[5px]" />
    </div>
    <div className="h-[3px] shrink-0 bg-[#ced5e3] border-b border-[#bcc4d6]" />
    <div className="h-[30px] shrink-0 bg-[#ced5e3] flex items-center text-[#333] pb-[3px]">
      <div className="ml-[5px]"><StackBtn plus /></div>
      <div className="ml-[12px]"><StackBtn /></div>
      <Sep className="ml-[8px]" />
      <Info className="ml-[8px]" />
      <span className="ml-[4px] w-[56px] whitespace-nowrap text-[13px] shrink-0">Group by:</span>
      <GroupToggle on><NsIcon /></GroupToggle>
      <div className="ml-[4px] w-[20px] flex justify-center shrink-0">
        <svg width="14" height="14" viewBox="0 0 14 14"><path d="M1 1 H6 V13 M6 4 H13 M6 8 H13 M6 12 H13" stroke="#444" fill="none" /></svg>
      </div>
      <div className="ml-[2px] flex shrink-0">
        <GroupToggle on>
          <svg width="8" height="14" viewBox="0 0 8 14"><path d="M0 1 H8 M0 4 H8 M0 7 H8 M0 10 H8 M0 13 H8" stroke="#222" strokeWidth="1.2" /></svg>
        </GroupToggle>
        <GroupToggle on><ClassIcon /></GroupToggle>
      </div>
      <svg width="15" height="12" viewBox="0 0 15 12" className="ml-[16px] shrink-0"><path d="M0 1 H6 L7 2 H15 V12 H0 Z" fill="#c79b58" /></svg>
      <svg width="12" height="14" viewBox="0 0 12 14" className="ml-[14px] shrink-0"><path d="M1 1 H8 L11 4 V13 H1 Z" fill="#f4f4f4" stroke="#222" strokeWidth="1.5" /></svg>
      <Sep className="ml-[9px]" />
      <div className="ml-auto mr-[4px] shrink-0"><div className="w-[7px] h-px bg-[#333] mb-px" /><Caret /></div>
    </div>
    <div className="flex shrink-0 h-[405px]">
      <div className="w-[326px] shrink-0 flex flex-col">
        <div className="h-[22px] shrink-0 bg-[#f6f6f6] flex items-center pl-[6px] text-[#222]">61 code elements</div>
        <div className="h-[23px] shrink-0 bg-[#ced5e3] flex items-center font-bold text-[#222] whitespace-nowrap overflow-hidden">
          <span className="ml-[8px] w-[91px] shrink-0">4 namespaces</span>
          <span className="w-[55px] shrink-0">10 types</span>
          <span className="w-[74px] shrink-0">31 methods</span>
          <span className="w-[56px] shrink-0">16 fields</span>
          <span>matched</span>
        </div>
        <div className="h-[341px] shrink-0 bg-white overflow-hidden pt-[2px]">
          {treeRows.map((row, i) => <TreeRow key={i} row={row} />)}
        </div>
        <div className="h-[19px] shrink-0 bg-[#d6e3f5] flex items-center pl-[3px] text-[#222]">
          Sum
          <div className="ml-auto w-[16px] h-[16px] border border-[#6c94c8] bg-[#eef3fb] flex items-center justify-center"><ChevronsUp size={13} strokeWidth={2.5} className="text-[#00397a]" /></div>
        </div>
      </div>
      <div className="flex-1 bg-[#dfdfe7] flex flex-col items-center">
        <svg width="9" height="5" viewBox="0 0 9 5" className="mt-[6px]"><polygon points="0,5 9,5 4.5,0" fill="#a8a9b2" /></svg>
        <div className="w-[9px] h-[72px] mt-[5px] bg-[#c2c3c9]" />
        <svg width="9" height="5" viewBox="0 0 9 5" className="mt-auto mb-[25px]"><polygon points="0,0 9,0 4.5,5" fill="#a8a9b2" /></svg>
      </div>
    </div>
    <div className="h-[19px] shrink-0 flex text-[#e4e8f5] bg-[#5d6b99]">
      <div className="w-[85px] bg-[#f5f6fe] text-[#2b2b2b] flex items-center pl-[5px]">Search Results</div>
      <div className="ml-[2px] w-[100px] mt-px bg-[#40508d] flex items-center pl-[5px]">Solution Explorer</div>
      <div className="ml-[2px] w-[84px] mt-px bg-[#40508d] flex items-center pl-[5px]">Team Explorer</div>
    </div>
    {/* annotation frame the author drew on the screenshot */}
    <div className="absolute left-[-5px] top-[34px] w-[354px] h-[73px] border-x-[5px] border-b-[5px] border-t-[7px] border-black pointer-events-none" />
  </div>
);

const StatusBar = () => (
  <div className="h-[26px] shrink-0 bg-[#40508d] flex items-center text-[#f2f3fb] relative">
    <svg width="16" height="12" viewBox="0 0 16 12" className="ml-[4px]"><path d="M4 1 H15 L12 11 H1 Z" fill="none" stroke="#fff" strokeWidth="1.2" /></svg>
    <span className="ml-[8px]">Ready</span>
    <div className="ml-auto flex items-center">
      <GitPullRequest size={15} className="text-white" />
      <ArrowUp size={13} strokeWidth={3} className="ml-[19px] text-[#e4e8f5]" />
      <span className="ml-[10px] w-[8px]">0</span>
      <Pencil size={12} className="ml-[19px] text-[#d8dcec] fill-[#d8dcec]" />
      <span className="ml-[8px] w-[20px]">99*</span>
      <svg width="14" height="14" viewBox="0 0 14 14" className="ml-[20px]">
        <rect x="2.5" y="2.5" width="9" height="9" fill="#d8dcec" transform="rotate(45 7 7)" />
        <path d="M5 4 L9.5 8.5 M7 6 V10" stroke="#40508d" strokeWidth="1.2" />
      </svg>
      <span className="ml-[8px] w-[68px] whitespace-nowrap">OrchardCore</span>
      <svg width="16" height="14" viewBox="0 0 16 14" className="ml-[20px]">
        <path d="M2 2 L8 7 L14 2 M8 7 V13" stroke="#e4e8f5" strokeWidth="2.5" fill="none" />
      </svg>
      <span className="ml-[8px] w-[18px]">dev</span>
      <svg width="7" height="4" viewBox="0 0 7 4" className="ml-[7px]"><polygon points="0,4 7,4 3.5,0" fill="#fff" /></svg>
      <div className="ml-[25px] relative w-[14px]">
        <Bell size={13} className="text-[#c4cae0] fill-[#c4cae0]" />
        <div className="absolute left-[7px] top-[5px] w-[12px] h-[12px] rounded-full bg-[#e51414] text-white text-[10px] font-bold flex items-center justify-center">4</div>
      </div>
      <div className="ml-[30px] mr-[4px] w-[18px] h-[18px] rounded-full bg-[#ff0000] border-2 border-white" />
    </div>
  </div>
);

export default function App() {
  return (
    <div className="relative w-[1366px] h-[736px] overflow-hidden flex flex-col bg-[#5d6b99] font-['Roboto',sans-serif] text-[12px]">
      <TitleBar />
      <Toolbar />
      <div className="h-[636px] shrink-0 flex">
        <div className="w-[32px] shrink-0 flex items-start pt-[6px]">
          <div className="w-[6px] h-[42px] bg-[#435580] shrink-0" />
          <span className="ml-[5px] [writing-mode:vertical-rl] text-[#e8ebf6] leading-[14px]">Toolbox</span>
        </div>
        <DocPane />
        <div className="w-[7px] shrink-0" />
        <SearchPane />
        <div className="flex-1 flex items-start pt-[6px] pl-[8px]">
          <span className="[writing-mode:vertical-rl] text-[#e8ebf6] leading-[15px]">Properties</span>
          <div className="ml-auto w-[6px] h-[53px] bg-[#435580]" />
        </div>
      </div>
      <StatusBar />
      <div className="h-[8px] shrink-0 flex overflow-hidden bg-[#3c3c3c]">
        <div className="w-[48px] bg-[#263538]" />
        <div className="w-[344px] bg-[#f0f0f0] border-t border-[#cfcfcf]" />
        <span className="ml-[870px] text-white text-[12px] leading-[14px] pt-[4px] whitespace-nowrap">6:20 PM</span>
      </div>
    </div>
  );
}
